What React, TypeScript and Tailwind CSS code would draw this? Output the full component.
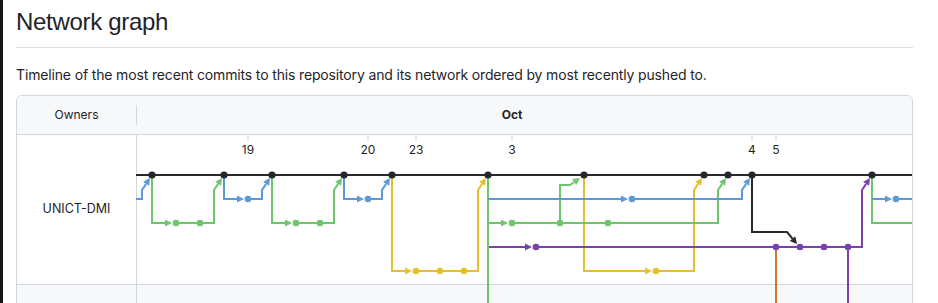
type Pt = [number, number];

const X = (k: number) => 152 + 24 * k;

const C = {
  black: "#25292e",
  blue: "#5a9ad9",
  green: "#6cc66c",
  yellow: "#e6c02c",
  purple: "#7a40ad",
  orange: "#cd7a2e",
};

type Edge = { color: string; pts: Pt[]; arrow?: boolean };

// parent on a lower row -> child on the main row
const merge = (color: string, px: number, py: number, cx: number, cy: number): Edge => ({
  color,
  pts: [[px, py], [cx - 10, py], [cx - 10, cy + 15], [cx - 2, cy + 3]],
  arrow: true,
});

// parent on the main row -> child on a lower row
const branch = (color: string, px: number, py: number, cx: number, cy: number): Edge => ({
  color,
  pts: [[px, py], [px, cy], [cx - 4, cy]],
  arrow: true,
});

const line = (color: string, x1: number, x2: number, y: number): Edge => ({
  color,
  pts: [[x1, y], [x2, y]],
});

const vline = (color: string, x: number, y1: number, y2: number): Edge => ({
  color,
  pts: [[x, y1], [x, y2]],
});

const edges: Edge[] = [
  // yellow
  branch(C.yellow, X(10), 176, X(11), 272),
  line(C.yellow, X(11), X(13), 272),
  merge(C.yellow, X(13), 272, X(14), 176),
  branch(C.yellow, X(18), 176, X(21), 272),
  merge(C.yellow, X(21), 272, X(23), 176),
  // purple + orange
  { color: C.purple, pts: [[X(14), 248], [X(16) - 4, 248]], arrow: true },
  line(C.purple, X(16), X(29), 248),
  merge(C.purple, X(29), 248, X(30), 176),
  vline(C.purple, X(29), 248, 286),
  vline(C.orange, X(26), 248, 286),
  // green
  branch(C.green, X(0), 176, X(1), 224),
  line(C.green, X(1), X(2), 224),
  merge(C.green, X(2), 224, X(3), 176),
  branch(C.green, X(5), 176, X(6), 224),
  line(C.green, X(6), X(7), 224),
  merge(C.green, X(7), 224, X(8), 176),
  branch(C.green, X(14), 176, X(15), 224),
  line(C.green, X(15), X(19), 224),
  merge(C.green, X(19), 224, X(24), 176),
  { color: C.green, pts: [[X(17), 224], [X(17), 186], [570, 186], [580, 179]], arrow: true },
  { color: C.green, pts: [[X(30), 176], [X(30), 224], [912, 224]] },
  vline(C.green, X(14), 176, 286),
  // blue
  merge(C.blue, 136, 200, X(0), 176),
  branch(C.blue, X(3), 176, X(4), 200),
  merge(C.blue, X(4), 200, X(5), 176),
  branch(C.blue, X(8), 176, X(9), 200),
  merge(C.blue, X(9), 200, X(10), 176),
  { color: C.blue, pts: [[X(14), 200], [X(20) - 4, 200]], arrow: true },
  merge(C.blue, X(20), 200, X(25), 176),
  { color: C.blue, pts: [[X(30), 200], [X(31) - 4, 200]], arrow: true },
  line(C.blue, X(31), 912, 200),
  // black
  line(C.black, 136, 912, 176),
  { color: C.black, pts: [[X(25), 176], [X(25), 233], [787, 233], [797, 245]], arrow: true },
];

const dots: { color: string; y: number; ks: number[] }[] = [
  { color: C.black, y: 176, ks: [0, 3, 5, 8, 10, 14, 18, 23, 24, 25, 30] },
  { color: C.blue, y: 200, ks: [4, 9, 20, 31] },
  { color: C.green, y: 224, ks: [1, 2, 6, 7, 15, 17, 19] },
  { color: C.purple, y: 248, ks: [16, 26, 27, 28, 29] },
  { color: C.yellow, y: 272, ks: [11, 12, 13, 21] },
];

const days: { k: number; label: string }[] = [
  { k: 4, label: "19" },
  { k: 9, label: "20" },
  { k: 11, label: "23" },
  { k: 15, label: "3" },
  { k: 25, label: "4" },
  { k: 26, label: "5" },
];

function EdgePath({ edge }: { edge: Edge }) {
  const pts = edge.pts.slice();
  let head: string | null = null;
  if (edge.arrow) {
    const tip = pts[pts.length - 1];
    const from = pts[pts.length - 2];
    const dx = tip[0] - from[0];
    const dy = tip[1] - from[1];
    const l = Math.hypot(dx, dy);
    const ux = dx / l;
    const uy = dy / l;
    const bx = tip[0] - ux * 7;
    const by = tip[1] - uy * 7;
    pts[pts.length - 1] = [bx, by];
    head = `${tip[0]},${tip[1]} ${bx - uy * 3.6},${by + ux * 3.6} ${bx + uy * 3.6},${by - ux * 3.6}`;
  }
  return (
    <g>
      <polyline
        points={pts.map((p) => p.join(",")).join(" ")}
        fill="none"
        stroke={edge.color}
        strokeWidth={2}
      />
      {head && <polygon points={head} fill={edge.color} />}
    </g>
  );
}

function Graph() {
  return (
    <svg width={775} height={149} viewBox="137 136 775 149" className="block overflow-visible">
      {days.map((d) => (
        <g key={d.label}>
          <line x1={X(d.k)} x2={X(d.k)} y1={136} y2={142} stroke="#d0d7de" strokeWidth={1} />
          <text x={X(d.k)} y={154.5} textAnchor="middle" fontSize={12} fill="#1f2328">
            {d.label}
          </text>
        </g>
      ))}
      {edges.map((e, i) => (
        <EdgePath key={i} edge={e} />
      ))}
      {dots.map((row) =>
        row.ks.map((k) => (
          <circle
            key={`${row.color}-${k}`}
            cx={X(k)}
            cy={row.y}
            r={row.color === C.black ? 3.6 : 3.3}
            fill={row.color}
          />
        ))
      )}
    </svg>
  );
}

export default function App() {
  return (
    <div className="flex min-h-[303px] bg-white font-['Inter','Liberation_Sans',Arial,sans-serif] text-[#1f2328]">
      <div className="w-[3px] shrink-0 bg-[#161616]" />
      <div className="ml-[13px] w-[897px]">
        <h2 className="border-b border-[#d8dee4] pt-[7px] pb-[10px] font-['Liberation_Sans',Arial,sans-serif] text-[24px] leading-[30px] font-normal tracking-[-0.3px]">
          Network graph
        </h2>
        <p className="mt-[17px] text-sm leading-5 tracking-[-0.15px]">
          Timeline of the most recent commits to this repository and its network ordered by most recently pushed to.
        </p>
        <div className="mt-[10px] overflow-hidden rounded-md border border-[#d0d7de]">
          <div className="flex h-[39px] border-b border-[#d0d7de] bg-[#f6f8fa] text-xs">
            <div className="flex w-[119px] items-center justify-center">Owners</div>
            <div className="h-5 w-px self-center bg-[#d0d7de]" />
            <div className="flex flex-1 items-center pl-[375px]">
              <span className="flex w-0 justify-center font-bold">Oct</span>
            </div>
          </div>
          <div className="flex h-[150px] border-b border-[#d0d7de]">
            <div className="flex w-[120px] items-center justify-center border-r border-[#d0d7de] text-[12.5px]">
              UNICT-DMI
            </div>
            <Graph />
          </div>
          <div className="flex h-[40px] bg-[#f6f8fa]">
            <div className="w-[120px] border-r border-[#d0d7de]" />
            <svg width={775} height={40} viewBox="137 286 775 40" className="block">
              <line x1={X(14)} x2={X(14)} y1={286} y2={326} stroke={C.green} strokeWidth={2} />
              <line x1={X(26)} x2={X(26)} y1={286} y2={326} stroke={C.orange} strokeWidth={2} />
              <line x1={X(29)} x2={X(29)} y1={286} y2={326} stroke={C.purple} strokeWidth={2} />
            </svg>
          </div>
        </div>
      </div>
    </div>
  );
}
